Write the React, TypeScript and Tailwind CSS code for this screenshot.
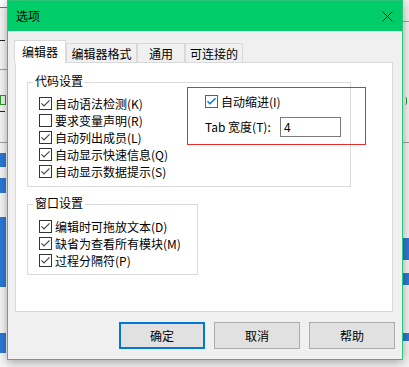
import React from "react";

const FONT = "font-['Noto_Sans_CJK_SC','Noto_Sans',sans-serif]";

function Check({ checked, blue }: { checked: boolean; blue?: boolean }) {
  const c = blue ? "#0078d7" : "#333333";
  const m = blue ? "#0078d7" : "#454545";
  return (
    <svg width="13" height="13" viewBox="0 0 13 13" className="shrink-0 block">
      <rect x="0.5" y="0.5" width="12" height="12" fill="#ffffff" stroke={c} />
      {checked && (
        <path d="M2.5 6.3 L5 8.8 L10.5 3.3" fill="none" stroke={m} strokeWidth={blue ? 1.5 : 1.2} />
      )}
    </svg>
  );
}

function Row({ label, checked, blue }: { label: string; checked: boolean; blue?: boolean }) {
  return (
    <div className="flex h-[17px] items-center gap-[3px]">
      <Check checked={checked} blue={blue} />
      <span className="whitespace-nowrap text-[12px] leading-[14px] text-black">{label}</span>
    </div>
  );
}

function Group({
  title,
  className,
  children,
}: {
  title: string;
  className: string;
  children: React.ReactNode;
}) {
  return (
    <div className={`relative border border-[#dadada] ${className}`}>
      <span className="absolute -top-[9px] left-[5px] bg-white px-[2px] text-[12px] leading-[14px] text-black">
        {title}
      </span>
      {children}
    </div>
  );
}

function Tab({ label, w, active }: { label: string; w: string; active?: boolean }) {
  if (active) {
    return (
      <div
        className={`relative z-10 -mb-px flex h-[23px] items-center justify-center border border-b-0 border-[#d9d9d9] bg-white text-[12px] leading-[14px] text-black ${w}`}
      >
        {label}
      </div>
    );
  }
  return (
    <div
      className={`flex h-[19px] items-center justify-center border border-b-0 border-[#d9d9d9] bg-[#f0f0f0] pt-px text-[12px] leading-[14px] text-black ${w}`}
    >
      {label}
    </div>
  );
}

function Btn({ label, primary }: { label: string; primary?: boolean }) {
  return (
    <div
      className={`flex h-[27px] w-[86px] items-center justify-center bg-[#e1e1e1] text-[12px] leading-[14px] text-black ${
        primary ? "border-2 border-[#0078d7]" : "border border-[#adadad]"
      }`}
    >
      {label}
    </div>
  );
}

export default function App() {
  return (
    <div className={`relative h-[367px] w-[409px] overflow-hidden bg-[#f3f3f3] ${FONT}`}>
      {/* background editor fragments (left) */}
      <div className="absolute left-0 top-0 h-[367px] w-[7px] overflow-hidden bg-[#f7f7f7]">
        <div className="absolute left-0 top-0 h-[8px] w-[7px] border-b border-[#3a9a3a] bg-white" />
        <div className="absolute left-0 top-[40px] h-px w-[5px] bg-[#222]" />
        <div className="absolute left-0 top-[69px] h-px w-[7px] bg-[#a0a0a0]" />
        <div className="absolute left-0 top-[95px] h-[10px] w-[6px] border border-[#2a9a2a] bg-[#eaf6ea]" />
        <div className="absolute left-0 top-[111px] h-px w-[5px] bg-[#222]" />
        <div className="absolute left-0 top-[142px] h-px w-[7px] bg-[#a0a0a0]" />
        <div className="absolute left-0 top-[153px] h-[14px] w-[6px] bg-[#2b7ad6]" />
        <div className="absolute left-0 top-[178px] h-[15px] w-[6px] bg-[#2b7ad6]" />
        <div className="absolute left-0 top-[217px] h-[70px] w-[6px] bg-[#2b7ad6]" />
        <div className="absolute left-0 top-[333px] h-[20px] w-[6px] bg-[#2b7ad6]" />
      </div>
      {/* background editor fragments (right) */}
      <div className="absolute right-0 top-0 h-[367px] w-[7px]">
        <div className="absolute left-0 top-[21px] h-px w-[7px] bg-[#a0a0a0]" />
        <div className="absolute left-[3px] top-[97px] h-[8px] w-[2px] rounded-r-full border-r border-[#2a8a2a]" />
        <div className="absolute left-0 top-[142px] h-px w-[7px] bg-[#a0a0a0]" />
        <div className="absolute left-[1px] top-[238px] h-[22px] w-[6px] bg-[#2b7ad6]" />
        <div className="absolute left-[1px] top-[273px] h-[12px] w-[6px] bg-[#2b7ad6]" />
        <div className="absolute left-[1px] top-[333px] h-[8px] w-[6px] bg-[#2b7ad6]" />
      </div>

      {/* dialog window */}
      <div className="absolute left-[7px] top-0 flex h-[360px] w-[396px] flex-col border border-[#2dc47a] bg-[#f0f0f0] shadow-[0_2px_10px_rgba(0,0,0,0.35)]">
        {/* title bar */}
        <div className="flex h-[30px] shrink-0 items-center bg-[#00cc6a]">
          <span className="pl-[8px] text-[12px] leading-[14px] text-black">选项</span>
          <div className="ml-auto flex h-[30px] w-[30px] items-center justify-center">
            <svg width="11" height="11" viewBox="0 0 11 11">
              <path d="M0.5 0.5 L10.5 10.5 M10.5 0.5 L0.5 10.5" stroke="#111" strokeWidth="1" />
            </svg>
          </div>
        </div>

        {/* content */}
        <div className="flex flex-col pl-[7px] pt-[9px]">
          <div className="-ml-px flex h-[22px] items-end">
            <Tab label="编辑器" w="w-[52px]" active />
            <Tab label="编辑器格式" w="w-[71px]" />
            <Tab label="通用" w="w-[48px]" />
            <Tab label="可连接的" w="w-[58px]" />
          </div>

          <div className="relative h-[250px] w-[378px] border border-[#d9d9d9] bg-white pl-[11px] pt-[19px]">
            <Group title="代码设置" className="flex h-[105px] w-[324px]">
              <div className="w-[177px] shrink-0 pl-[11px] pt-[12px]">
                <Row label="自动语法检测(K)" checked />
                <Row label="要求变量声明(R)" checked={false} />
                <Row label="自动列出成员(L)" checked />
                <Row label="自动显示快速信息(Q)" checked />
                <Row label="自动显示数据提示(S)" checked />
              </div>
              <div className="flex flex-col pt-[10px]">
                <Row label="自动缩进(I)" checked blue />
                <div className="mt-[7px] flex items-center">
                  <span className="w-[75px] whitespace-nowrap text-[12px] leading-[14px] text-black">
                    Tab 宽度(T):
                  </span>
                  <div className="flex h-[20px] w-[61px] items-center border border-[#7a7a7a] bg-white pl-[3px] text-[12px] leading-[14px] text-black">
                    4
                  </div>
                </div>
              </div>
            </Group>

            <Group title="窗口设置" className="mt-[17px] h-[71px] w-[171px] pl-[11px] pt-[13px]">
              <Row label="编辑时可拖放文本(D)" checked />
              <Row label="缺省为查看所有模块(M)" checked />
              <Row label="过程分隔符(P)" checked />
            </Group>

            {/* red annotation box */}
            <div className="pointer-events-none absolute left-[171px] top-[24px] h-[58px] w-[179px] border border-[#e52d2d]" />
          </div>
        </div>

        {/* buttons */}
        <div className="mt-[10px] flex justify-end gap-[9px] pr-[7px]">
          <Btn label="确定" primary />
          <Btn label="取消" />
          <Btn label="帮助" />
        </div>
      </div>
    </div>
  );
}
